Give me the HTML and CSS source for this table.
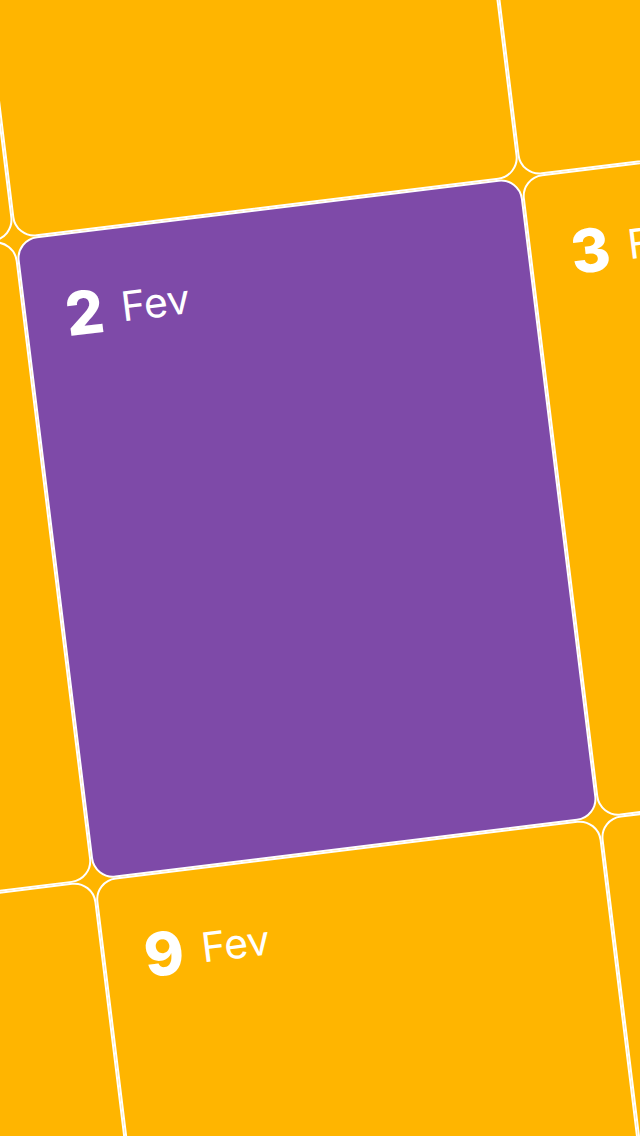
FILE: index.html
```html
<!DOCTYPE html>
<html lang="pt">
<head>
<meta charset="utf-8">
<title>Calendário</title>
<link rel="stylesheet" href="styles.css">
</head>
<body>
<div class="viewport">
  <div class="board">
    <div class="day"></div>
    <div class="day"></div>
    <div class="day"></div>
    <div class="day"></div>
    <div class="day active"><span class="num">2</span><span class="mon">Fev</span></div>
    <div class="day"><span class="num">3</span><span class="mon">Fev</span></div>
    <div class="day"></div>
    <div class="day"><span class="num">9</span><span class="mon">Fev</span></div>
    <div class="day"></div>
  </div>
</div>
</body>
</html>
```
FILE: styles.css
```css
html, body {
  margin: 0;
  padding: 0;
  background: #ffb500;
}

.viewport {
  width: 640px;
  height: 1136px;
  overflow: hidden;
  background: #ffb500;
}

.board {
  display: grid;
  grid-template-columns: repeat(3, 509px);
  grid-template-rows: repeat(3, 646px);
  width: 1527px;
  margin-left: -494px;
  margin-top: -407px;
  transform-origin: 509px 646px;
  transform: rotate(-7deg);
  background: #ffb500;
}

.day {
  box-sizing: border-box;
  border: 2px solid #ffffff;
  border-radius: 22px;
  background: #ffb500;
  display: flex;
  flex-direction: row;
  align-items: flex-start;
  padding: 45px 0 0 39px;
  height: 646px;
  color: #ffffff;
  font-family: "Inter", "Lato", sans-serif;
}

.day.active {
  background: #7e4aa8;
}

.num {
  font-size: 60px;
  font-weight: 800;
  line-height: 68px;
}

.mon {
  font-size: 41px;
  font-weight: 400;
  line-height: 66px;
  margin-left: 18px;
}
```
